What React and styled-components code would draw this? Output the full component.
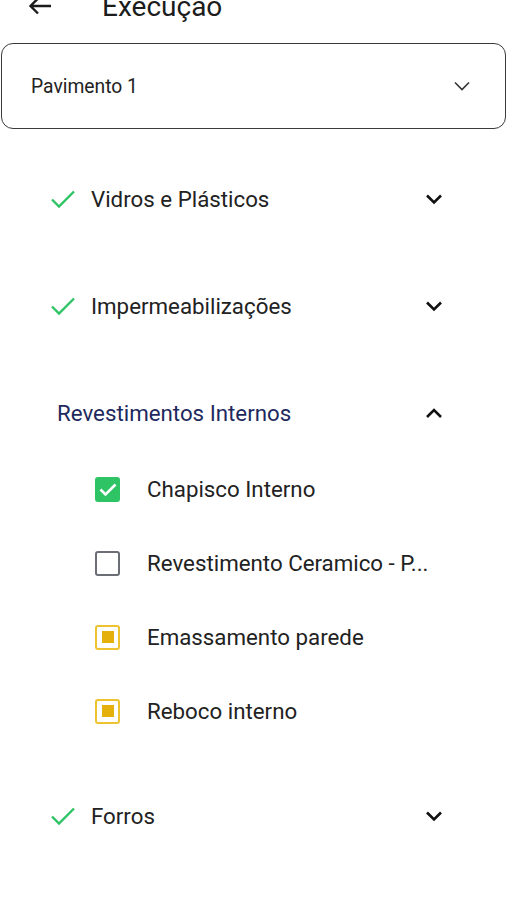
import React from 'react'
import styled, { createGlobalStyle } from 'styled-components'

const GlobalStyle = createGlobalStyle`
    body {
        margin: 0;
        background: #ffffff;
        font-family: Roboto, "Noto Sans", sans-serif;
    }
`;

const Page = styled.div`
    width: 507px;
    height: 900px;
    overflow: hidden;
    background: #ffffff;
`;

const Header = styled.div`
    height: 48px;
    margin-top: -18px;
    display: flex;
    align-items: center;
    padding-left: 28px;
    gap: 50px;
    color: #1c1c1c;
    font-size: 28px;
`;

const Select = styled.div`
    margin: 13px 1px 0 1px;
    height: 84px;
    border: 1px solid #3a3a3a;
    border-radius: 12px;
    display: flex;
    align-items: center;
    justify-content: space-between;
    padding: 0 34px 0 29px;
    font-size: 19.3px;
    color: #222;
`;

const List = styled.div`
    display: flex;
    flex-direction: column;
    padding: 46px 64px 0 50px;
`;

const Section = styled.div`
    display: flex;
    align-items: center;
    height: 48px;
    margin-bottom: ${props => props.open ? '2px' : '59px'};
    padding-left: ${props => props.open ? '7px' : '0'};
`;

const SectionTitle = styled.div`
    flex: 1;
    font-size: 22.3px;
    color: ${props => props.open ? '#1e2a5e' : '#222'};
    margin-left: ${props => props.open ? '0' : '15px'};
`;

const SubList = styled.div`
    display: flex;
    flex-direction: column;
    gap: 26px;
    padding: 26px 0 57px 45px;
`;

const SubItem = styled.div`
    display: flex;
    align-items: center;
    height: 48px;
    gap: 27px;
    font-size: 22.3px;
    color: #222;
`;

const Box = styled.div`
    width: 25px;
    height: 25px;
    box-sizing: border-box;
    border-radius: 3px;
    flex-shrink: 0;
    display: flex;
    align-items: center;
    justify-content: center;
    background: ${props => props.state === 'done' ? '#2ec466' : '#fff'};
    border: 2.5px solid ${props =>
        props.state === 'done' ? '#2ec466' : props.state === 'partial' ? '#eec330' : '#6b6e75'};
`;

const Dot = styled.div`
    width: 12px;
    height: 12px;
    background: #e3b00c;
`;

const Ellipsis = styled.span`
    white-space: nowrap;
`;

const Check = () => (
    <svg width="26" height="20" viewBox="0 0 26 20">
        <path d="M2 10.5 L9 17.5 L24 2.5" fill="none" stroke="#2ec466" strokeWidth="2.4" />
    </svg>
);

const Chevron = ({ up, thin }) => (
    <svg width="18" height="12" viewBox="0 0 18 12">
        <path
            d={up ? 'M2 10 L9 3 L16 10' : 'M2 2.5 L9 9.5 L16 2.5'}
            fill="none"
            stroke={thin ? '#333' : '#111'}
            strokeWidth={thin ? 1.6 : 2.6}
        />
    </svg>
);

const Arrow = () => (
    <svg width="24" height="20" viewBox="0 0 24 20">
        <path d="M23 10 H3 M10 2.5 L2.5 10 L10 17.5" fill="none" stroke="#1c1c1c" strokeWidth="2.4" />
    </svg>
);

const BoxDone = () => (
    <Box state="done">
        <svg width="18" height="15" viewBox="0 0 18 15">
            <path d="M1.5 7.5 L6.5 12.5 L16.5 2.5" fill="none" stroke="#fff" strokeWidth="2.6" />
        </svg>
    </Box>
);

function App() {
    return (
        <Page>
            <GlobalStyle />
            <Header>
                <Arrow />
                <span>Execução</span>
            </Header>
            <Select>
                <span>Pavimento 1</span>
                <Chevron thin />
            </Select>
            <List>
                <Section>
                    <Check />
                    <SectionTitle>Vidros e Plásticos</SectionTitle>
                    <Chevron />
                </Section>
                <Section>
                    <Check />
                    <SectionTitle>Impermeabilizações</SectionTitle>
                    <Chevron />
                </Section>
                <Section open>
                    <SectionTitle open>Revestimentos Internos</SectionTitle>
                    <Chevron up />
                </Section>
                <SubList>
                    <SubItem>
                        <BoxDone />
                        <span>Chapisco Interno</span>
                    </SubItem>
                    <SubItem>
                        <Box state="empty" />
                        <Ellipsis>Revestimento Ceramico - P...</Ellipsis>
                    </SubItem>
                    <SubItem>
                        <Box state="partial"><Dot /></Box>
                        <span>Emassamento parede</span>
                    </SubItem>
                    <SubItem>
                        <Box state="partial"><Dot /></Box>
                        <span>Reboco interno</span>
                    </SubItem>
                </SubList>
                <Section>
                    <Check />
                    <SectionTitle>Forros</SectionTitle>
                    <Chevron />
                </Section>
            </List>
        </Page>
    )
}

export default App
